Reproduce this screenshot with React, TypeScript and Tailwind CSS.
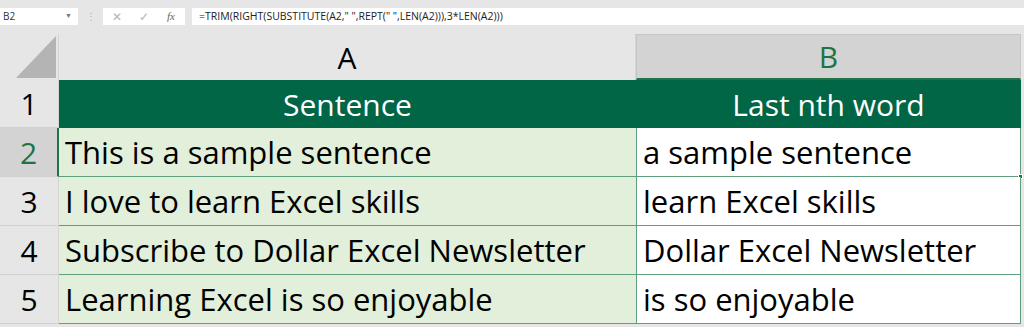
import React from "react";

const rows = [
  { n: 2, a: "This is a sample sentence", b: "a sample sentence" },
  { n: 3, a: "I love to learn Excel skills", b: "learn Excel skills" },
  { n: 4, a: "Subscribe to Dollar Excel Newsletter", b: "Dollar Excel Newsletter" },
  { n: 5, a: "Learning Excel is so enjoyable", b: "is so enjoyable" },
];

const App: React.FC = () => {
  return (
    <div className="w-[1024px] h-[327px] overflow-hidden bg-[#e6e6e6] font-['Open_Sans','Liberation_Sans',sans-serif]">
      {/* Formula bar */}
      <div className="h-[34px] flex items-start pt-[8px]">
        <div className="w-[78px] h-[17px] bg-white flex items-center justify-between pl-[3px] pr-[6px] text-[10px] text-[#333]">
          <span>B2</span>
          <span className="text-[7px] text-[#777]">▼</span>
        </div>
        <div className="w-[25px] flex justify-center text-[10px] text-[#b0b0b0] leading-[17px]">⋮</div>
        <div className="w-[82px] h-[17px] bg-white flex items-center text-[#b5b5b5]">
          <span className="w-[27px] text-center text-[12px]">✕</span>
          <span className="w-[27px] text-center text-[12px]">✓</span>
          <span className="w-[28px] text-center text-[11px] italic text-[#666] font-['Liberation_Serif',serif]">fx</span>
        </div>
        <div className="w-[7px]" />
        <div className="flex-1 h-[17px] bg-white flex items-center pl-[7px] text-[10.5px] text-[#222]">
          =TRIM(RIGHT(SUBSTITUTE(A2," ",REPT(" ",LEN(A2))),3*LEN(A2)))
        </div>
      </div>

      {/* Grid */}
      <div className="grid grid-cols-[59px_577px_385px_3px]">
        {/* Column headers */}
        <div className="h-[46px] relative border-r border-[#d4d4d4]">
          <svg className="absolute right-[2px] bottom-[2px]" width="40" height="42" viewBox="0 0 40 42">
            <polygon points="40,0 40,42 0,42" fill="#b4b4b4" />
          </svg>
        </div>
        <div className="h-[46px] flex items-center justify-center text-[30px] text-black border-r border-[#d4d4d4]">
          A
        </div>
        <div className="h-[46px] flex items-center justify-center text-[30px] text-[#217346] bg-[#d3d3d3] border-l border-t border-r border-[#c6c6c6] border-b-2 border-b-[#217346]">
          B
        </div>
        <div className="h-[46px]" />

        {/* Row 1 */}
        <div className="h-[48px] flex items-center justify-center text-[30px] text-black border-r border-[#d4d4d4] border-b border-b-[#d0d0d0]">
          1
        </div>
        <div className="h-[48px] bg-[#006646] flex items-center justify-center text-[30px] text-white">
          Sentence
        </div>
        <div className="h-[48px] bg-[#006646] flex items-center justify-center text-[30px] text-white">
          Last nth word
        </div>
        <div className="h-[48px]" />

        {rows.map((r) => (
          <React.Fragment key={r.n}>
            <div
              className={`h-[49px] flex items-center justify-center text-[30px] border-b border-[#d0d0d0] ${
                r.n === 2
                  ? "bg-[#d3d3d3] text-[#217346] border-r-2 border-r-[#217346]"
                  : "text-black border-r border-r-[#d4d4d4]"
              }`}
            >
              {r.n}
            </div>
            <div className="h-[49px] bg-[#e2efda] flex items-center pl-[6px] text-[31px] text-black border-b border-[#5f9f7f] whitespace-nowrap">
              {r.a}
            </div>
            <div className="h-[49px] bg-white flex items-center pl-[6px] text-[31px] text-black border-l border-r border-b border-[#5f9f7f] whitespace-nowrap relative">
              {r.b}
              {r.n === 2 && (
                <span className="absolute right-[-3px] bottom-[-3px] w-[5px] h-[5px] bg-[#217346] border border-white" />
              )}
            </div>
            <div className="h-[49px]" />
          </React.Fragment>
        ))}
      </div>
    </div>
  );
};

export default App;
